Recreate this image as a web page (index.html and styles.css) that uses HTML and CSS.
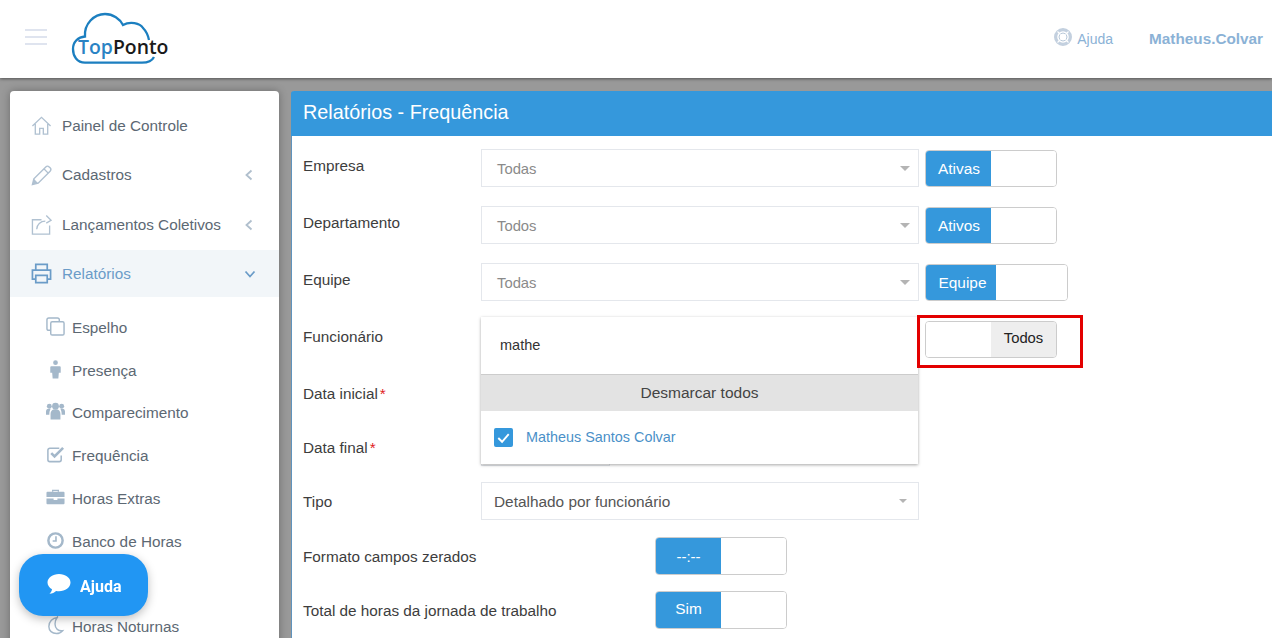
FILE: index.html
```html
<!DOCTYPE html>
<html lang="pt-BR">
<head>
<meta charset="utf-8">
<title>Relatórios - Frequência</title>
<link rel="stylesheet" href="styles.css">
</head>
<body>
<header class="topbar">
  <button class="burger" aria-label="Menu"><span></span><span></span><span></span></button>
  <svg class="logo" width="100" height="56" viewBox="0 0 100 56" aria-label="TopPonto">
    <path d="M72 51.700H15C7 51.700 3 45 3 38C3 31 8 26 15 25.500C14 13 24 3 35 3C43 3 50 8 53 14C60 10 70 12 73 17C76 20 78 24 79 29M84 46C82 50 78 51.700 72 51.700" fill="none" stroke="#1c7fc0" stroke-width="2.300"/>
    <text class="logo-text" x="8" y="43"><tspan class="logo-top">Top</tspan><tspan class="logo-ponto">Ponto</tspan></text>
  </svg>
  <nav class="top-links">
    <a class="help-link">
      <svg width="18" height="18" viewBox="0 0 18 18"><circle cx="9" cy="9" r="7.400" fill="none" stroke="#c3d0df" stroke-width="3.200"/><circle cx="9" cy="9" r="4" fill="none" stroke="#b8c8d9" stroke-width="1"/><path d="M3.500 3.500l3 3M14.500 3.500l-3 3M3.500 14.500l3-3M14.500 14.500l-3-3" stroke="#fff" stroke-width="1.100"/></svg>
      <span>Ajuda</span>
    </a>
    <a class="user-link">Matheus.Colvar</a>
  </nav>
</header>

<div class="workspace">
  <aside class="sidebar">
    <ul class="menu">
      <li class="menu-item">
        <svg class="mi" viewBox="0 0 22 22"><path d="M1.500 11.500L11 2.500l9.500 9M4.500 9.500V20h4.600v-6h3.800v6h4.600V9.500" fill="none" stroke="#b0c1d1" stroke-width="1.400"/></svg>
        <span>Painel de Controle</span>
      </li>
      <li class="menu-item">
        <svg class="mi" viewBox="0 0 22 22"><path d="M1.500 20.500l1.500-6L15.500 2c1-1 2.500-1 3.500 0l1 1c1 1 1 2.400 0 3.500L7.500 19z" fill="none" stroke="#b0c1d1" stroke-width="1.500"/><path d="M1.500 20.500l1.500-6 4.500 4.500z" fill="#b0c1d1"/><path d="M13.500 4l4.500 4.500" stroke="#b0c1d1" stroke-width="1.400"/></svg>
        <span>Cadastros</span>
        <svg class="chev" viewBox="0 0 10 12"><path d="M7.500 1.500L2.500 6l5 4.500" fill="none" stroke="#b0bfcd" stroke-width="1.800"/></svg>
      </li>
      <li class="menu-item">
        <svg class="mi" viewBox="0 0 22 22"><path d="M11 6H1.500v15h18v-9" fill="none" stroke="#b0c1d1" stroke-width="1.400"/><path d="M6 16c0-5 4-8.500 9-8.500M16 1.500l5 5-5 3" fill="none" stroke="#b0c1d1" stroke-width="1.400"/></svg>
        <span>Lançamentos Coletivos</span>
        <svg class="chev" viewBox="0 0 10 12"><path d="M7.500 1.500L2.500 6l5 4.500" fill="none" stroke="#b0bfcd" stroke-width="1.800"/></svg>
      </li>
      <li class="menu-item menu-active">
        <svg class="mi" viewBox="0 0 22 22"><path d="M5 7V1.500h12V7M5 17H1.500V7.500h19V17H17M5 13h12v7.500H5z" fill="none" stroke="#6b9cc8" stroke-width="1.800"/></svg>
        <span>Relatórios</span>
        <svg class="chev chev-down" viewBox="0 0 12 10"><path d="M1.500 2.500L6 7.500l4.500-5" fill="none" stroke="#6b9cc8" stroke-width="1.800"/></svg>
      </li>
    </ul>
    <ul class="submenu">
      <li class="sub-item">
        <svg class="si" viewBox="0 0 20 20"><rect x="1" y="1" width="13" height="13" rx="2" fill="none" stroke="#a4b8ca" stroke-width="1.500"/><rect x="5" y="5" width="14" height="14" rx="1.500" fill="#fff" stroke="#a4b8ca" stroke-width="1.500"/></svg>
        <span>Espelho</span>
      </li>
      <li class="sub-item">
        <svg class="si" viewBox="0 0 20 20"><circle cx="10" cy="2.800" r="2.500" fill="#a4b8ca"/><path d="M5.500 6.500h9a1 1 0 0 1 1 1v6h-2l-.5 6h-6l-.5-6h-2v-6a1 1 0 0 1 1-1z" fill="#a4b8ca"/></svg>
        <span>Presença</span>
      </li>
      <li class="sub-item">
        <svg class="si si-wide" viewBox="0 0 20 20"><circle cx="3.500" cy="4.500" r="2.600" fill="#a4b8ca"/><circle cx="16.500" cy="4.500" r="2.600" fill="#a4b8ca"/><circle cx="10" cy="4.500" r="3.600" fill="#a4b8ca"/><path d="M0 13.500V10c0-1.500 1-2.800 2.500-2.800H5C4 8.500 3.500 10.500 3.500 13.500zM20 13.500V10c0-1.500-1-2.800-2.500-2.800H15c1 1.300 1.500 3.300 1.500 6.300zM4.800 18.500v-6c0-2 1.500-4.500 3-4.500h4.400c1.500 0 3 2.500 3 4.500v6z" fill="#a4b8ca"/></svg>
        <span>Comparecimento</span>
      </li>
      <li class="sub-item">
        <svg class="si" viewBox="0 0 20 20"><path d="M16 11v4.500a2 2 0 0 1-2 2H4a2 2 0 0 1-2-2v-10a2 2 0 0 1 2-2h10" fill="none" stroke="#a4b8ca" stroke-width="1.600"/><path d="M5.500 8.500l3.500 3.500 9-9" fill="none" stroke="#a4b8ca" stroke-width="2.800"/></svg>
        <span>Frequência</span>
      </li>
      <li class="sub-item">
        <svg class="si" viewBox="0 0 20 20"><path d="M7 4V2.500h6V4" fill="none" stroke="#a4b8ca" stroke-width="1.400"/><path d="M1.500 4h17a1 1 0 0 1 1 1v4.500H.5V5a1 1 0 0 1 1-1zM.5 11h7.500v1.500h4V11h7.500v5a1 1 0 0 1-1 1h-17a1 1 0 0 1-1-1z" fill="#a4b8ca"/></svg>
        <span>Horas Extras</span>
      </li>
      <li class="sub-item">
        <svg class="si" viewBox="0 0 20 20"><circle cx="10" cy="10" r="7.500" fill="none" stroke="#a4b8ca" stroke-width="2.600"/><path d="M10.500 5.500v5H7" fill="none" stroke="#a4b8ca" stroke-width="1.700"/></svg>
        <span>Banco de Horas</span>
      </li>
      <li class="sub-item"></li>
      <li class="sub-item">
        <svg class="si" viewBox="0 0 20 20"><path d="M12 1.500C7 2 3 6 3 11c0 4.500 3.500 7.500 8 7.500 2.500 0 4.800-1 6.500-3-4.500.5-8-2-8-7 0-3 1-5.500 2.500-7.500z" fill="none" stroke="#a4b8ca" stroke-width="1.500"/></svg>
        <span>Horas Noturnas</span>
      </li>
    </ul>
  </aside>

  <main class="panel">
    <h1 class="panel-title">Relatórios - Frequência</h1>
    <form class="panel-body">
      <div class="row row-a">
        <label class="lbl">Empresa</label>
        <div class="select muted">Todas<i class="caret"></i></div>
        <div class="toggle"><span class="on">Ativas</span><span class="off"></span></div>
      </div>
      <div class="row row-a">
        <label class="lbl">Departamento</label>
        <div class="select muted">Todos<i class="caret"></i></div>
        <div class="toggle"><span class="on">Ativos</span><span class="off"></span></div>
      </div>
      <div class="row row-a">
        <label class="lbl">Equipe</label>
        <div class="select muted">Todas<i class="caret"></i></div>
        <div class="toggle toggle-wide"><span class="on">Equipe</span><span class="off"></span></div>
      </div>
      <div class="row row-b">
        <label class="lbl">Funcionário</label>
        <div class="select"></div>
        <div class="toggle"><span class="off"></span><span class="off-label">Todos</span></div>
      </div>
      <div class="row row-c">
        <label class="lbl lbl-c">Data inicial<b class="req">*</b></label>
        <div class="date"></div>
      </div>
      <div class="row row-d">
        <label class="lbl lbl-d">Data final<b class="req">*</b></label>
        <div class="date"></div>
      </div>
      <div class="row row-e">
        <label class="lbl lbl-e">Tipo</label>
        <div class="select select-dark">Detalhado por funcionário<i class="caret"></i></div>
      </div>
      <div class="row row-f">
        <label class="lbl lbl-wide">Formato campos zerados</label>
        <div class="toggle"><span class="on on-thin">--:--</span><span class="off"></span></div>
      </div>
      <div class="row row-f">
        <label class="lbl lbl-wide">Total de horas da jornada de trabalho</label>
        <div class="toggle"><span class="on">Sim</span><span class="off"></span></div>
      </div>
    </form>
  </main>
</div>

<div class="dropdown">
  <div class="dd-search">mathe</div>
  <div class="dd-action">Desmarcar todos</div>
  <div class="dd-option">
    <svg class="dd-check" viewBox="0 0 20 20"><rect width="20" height="20" rx="2" fill="#3598dc"/><path d="M4.500 10.500l4 4 7-8" fill="none" stroke="#fff" stroke-width="2"/></svg>
    <span>Matheus Santos Colvar</span>
  </div>
</div>

<div class="highlight"></div>

<button class="help-fab">
  <svg width="24" height="22" viewBox="0 0 24 22"><path d="M12 1C5.700 1 .5 4.800.5 9.500c0 2.800 1.800 5.200 4.500 6.800-.2 1.800-1.200 3.300-2.500 4.500 2.700-.2 5-1.300 6.600-2.900 1 .2 1.900.3 2.900.3 6.300 0 11.500-3.800 11.500-8.700S18.300 1 12 1z" fill="#fff"/></svg>
  Ajuda
</button>
</body>
</html>
```

FILE: styles.css
```css
* { box-sizing: border-box; }
html, body { margin: 0; padding: 0; height: 100%; overflow: hidden; }
body { background: #999; font-family: "Liberation Sans", Arial, sans-serif; font-size: 14px; color: #333; }

.topbar { height: 78px; background: #fff; display: flex; align-items: flex-start; box-shadow: 0 1px 3px rgba(0,0,0,.45); position: relative; z-index: 2; }
.burger { width: 22px; height: 16px; margin: 29px 0 0 25px; padding: 0; border: 0; background: none; display: flex; flex-direction: column; justify-content: space-between; }
.burger span { display: block; height: 2px; background: #dfe4ef; }
.logo { margin: 11px 0 0 23px; }
.logo-text { font-family: "Open Sans", sans-serif; font-size: 19.400px; font-weight: 600; }
.logo-top { fill: #2a83c4; }
.logo-ponto { fill: #1a1a1a; }
.top-links { margin-left: auto; padding-right: 9px; display: flex; gap: 36px; align-items: center; height: 20px; margin-top: 29px; }
.help-link { display: flex; align-items: center; gap: 5px; color: #8bb2d6; font-size: 14px; }
.help-link svg { margin-top: -4px; }
.user-link { color: #8bb2d6; font-weight: 700; font-size: 15.300px; }

.workspace { display: flex; gap: 12px; padding: 13px 0 0 10px; height: 560px; overflow: hidden; }

.sidebar { width: 269px; flex: none; height: 600px; background: #fff; border-radius: 4px 4px 0 0; box-shadow: 0 0 8px rgba(0,0,0,.3); padding-top: 10px; }
.menu, .submenu { list-style: none; margin: 0; padding: 0; }
.menu-item { height: 49.500px; display: flex; align-items: center; padding-left: 21px; color: #5c6873; font-size: 15.300px; }
.menu-item span { margin-left: 10px; flex: 1; }
.mi { width: 21px; height: 21px; flex: none; }
.chev { width: 10px; height: 12px; flex: none; margin-right: 25px; }
.chev-down { width: 12px; height: 10px; margin-right: 23px; }
.menu-active { background: #f2f6f9; color: #6b9cc8; height: 47px; padding-top: 1px; }
.submenu { padding-top: 10px; }
.sub-item { height: 42.750px; display: flex; align-items: center; padding-left: 36px; color: #5c6873; font-size: 15.300px; }
.sub-item span { margin-left: 7px; }
.si { width: 19px; height: 19px; flex: none; margin-top: -3px; }
.si-wide { width: 21px; margin-left: -1px; margin-right: -1px; }

.panel { flex: 1; background: #fff; border-radius: 4px 0 0 0; border-left: 1px solid #5f93bd; }
.panel-title { margin: 0 0 0 -1px; height: 45px; background: #3598dc; color: #fff; font-size: 19.800px; font-weight: 400; line-height: 42px; padding-left: 12px; border-radius: 3px 0 0 0; }
.panel-body { padding: 13px 0 0 11px; }
.row { display: flex; align-items: flex-start; }
.row-a { height: 57px; }
.row-b { height: 55px; }
.row-c { height: 55px; }
.row-d { height: 52px; }
.row-e { height: 55px; }
.row-f { height: 54px; }
.lbl { width: 178px; flex: none; font-size: 15.300px; color: #3d3d3d; padding-top: 8px; }
.lbl-c { padding-top: 10px; }
.lbl-d { padding-top: 9px; }
.lbl-e { padding-top: 11px; }
.lbl-wide { width: 352px; padding-top: 11px; }
.req { color: #e02222; font-weight: 400; margin-left: 2px; }
.select { position: relative; width: 438px; height: 38px; border: 1px solid #e4e7ec; background: #fff; padding-left: 15px; line-height: 38px; font-size: 14.800px; color: #555; flex: none; }
.select-dark { padding-left: 12px; font-size: 15.400px; }
.select-dark .caret { right: 11px; border-width: 4px; border-bottom: 0; }
.muted { color: #8a8a8a; }
.caret { position: absolute; right: 8px; top: 16px; border: 5px solid transparent; border-top-color: #b4b4b4; border-bottom: 0; }
.date { width: 129px; height: 36px; border: 1px solid #e4e7ec; background: #fff; }
.toggle { display: flex; width: 132px; height: 37px; margin: 1px 0 0 6px; border: 1px solid #ccc; border-radius: 4px; overflow: hidden; flex: none; }
.row-f .toggle { margin-left: 0; height: 38px; margin-top: 0; }
.row-f .on { line-height: 33px; padding-left: 0; }
.row-f .on-thin { line-height: 37px; font-size: 15px; }
.toggle-wide { width: 143px; }
.on { width: 65px; background: #3598dc; color: #fff; text-align: center; line-height: 35px; font-size: 15.400px; flex: none; padding-left: 1px; }
.toggle-wide .on { width: 70px; padding-left: 3px; }
.off { flex: 1; background: #fff; }
.off-label { width: 65px; background: #eee; color: #222; text-align: center; line-height: 33px; font-size: 14.800px; flex: none; }

.dropdown { position: absolute; left: 481px; top: 317px; width: 437px; height: 147px; background: #fff; box-shadow: 0 1px 3px rgba(0,0,0,.35); z-index: 3; }
.dd-search { height: 58px; line-height: 56px; padding-left: 19px; font-size: 14.500px; color: #333; border-bottom: 1px solid #ccc; }
.dd-action { height: 36px; line-height: 36px; background: #e3e3e3; text-align: center; font-size: 15.500px; color: #444; }
.dd-option { display: flex; align-items: center; gap: 13px; padding: 17px 0 0 13px; font-size: 14.400px; color: #4a90c8; }
.dd-option span { margin-top: -2px; }
.dd-check { width: 19px; height: 19px; flex: none; }

.highlight { position: absolute; left: 917px; top: 315px; width: 166px; height: 53px; border: 3px solid #e30000; z-index: 4; }

.help-fab { position: fixed; left: 19px; top: 554px; width: 129px; height: 62px; border: 0; border-radius: 24px; background: #2196f3; color: #fff; display: flex; align-items: center; gap: 9px; padding: 2px 0 0 28px; font-family: Roboto, sans-serif; font-weight: 700; font-size: 16px; box-shadow: 0 3px 10px rgba(0,0,0,.25); z-index: 5; }
.help-fab svg { margin-top: -4px; }
```
